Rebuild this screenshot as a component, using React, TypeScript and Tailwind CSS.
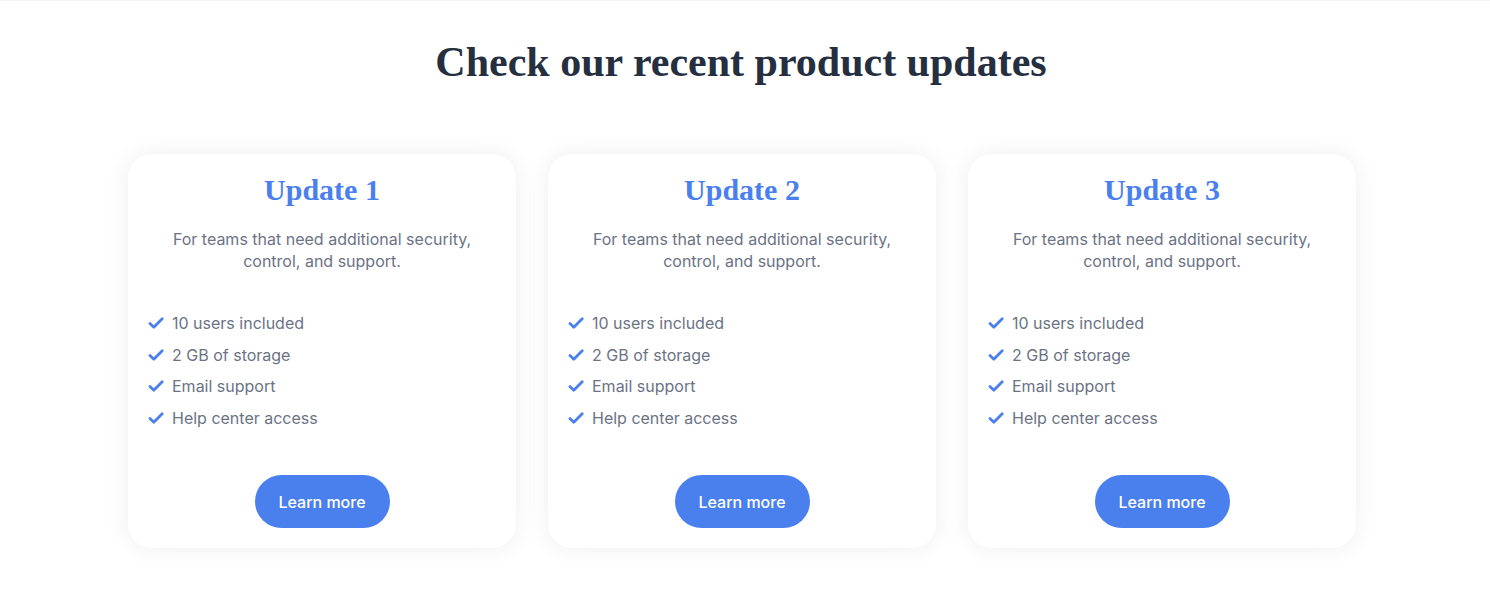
const FEATURES = ['10 users included', '2 GB of storage', 'Email support', 'Help center access'];

const UPDATES = ['Update 1', 'Update 2', 'Update 3'];

function CheckIcon() {
  return (
    <svg viewBox="0 0 16 16" className="h-[16px] w-[16px] shrink-0 text-[#4a80ee]" fill="none">
      <path d="M2 8.6l3.8 3.6L14.2 3.8" stroke="currentColor" strokeWidth="2.8" strokeLinecap="round" strokeLinejoin="round" />
    </svg>
  );
}

function UpdateCard({ title }: { title: string }) {
  return (
    <div className="flex h-[394px] w-[388px] flex-col items-center rounded-[24px] bg-white px-5 pt-[17px] shadow-[0_0_24px_rgba(0,0,0,0.07)]">
      <h3 className="font-['Liberation_Serif',serif] text-[30px] font-bold leading-[38px] text-[#4a80ee]">{title}</h3>
      <p className="mt-[19px] w-[300px] text-center text-[16px] leading-[22px] text-[#6b7385]">
        For teams that need additional security, control, and support.
      </p>
      <ul className="mt-[40px] flex w-full flex-col gap-[9.7px]">
        {FEATURES.map((f) => (
          <li key={f} className="flex h-[22px] items-center gap-2 text-[16px] text-[#6b7385]">
            <CheckIcon />
            {f}
          </li>
        ))}
      </ul>
      <button
        type="button"
        className="mt-[46px] h-[53px] w-[135px] rounded-full bg-[#4a80ee] text-[16px] font-medium text-white"
      >
        Learn more
      </button>
    </div>
  );
}

export default function App() {
  return (
    <div className="min-h-[599px] bg-white font-['Inter',sans-serif]">
      <div className="h-px bg-[#f3f3f3]" />
      <h2 className="mt-[37px] pr-[8px] text-center font-['Liberation_Serif',serif] text-[42px] font-bold leading-[48px] text-[#252f3f]">
        Check our recent product updates
      </h2>
      <div className="mt-[68px] flex justify-center gap-8 pr-[6px]">
        {UPDATES.map((u) => (
          <UpdateCard key={u} title={u} />
        ))}
      </div>
    </div>
  );
}
